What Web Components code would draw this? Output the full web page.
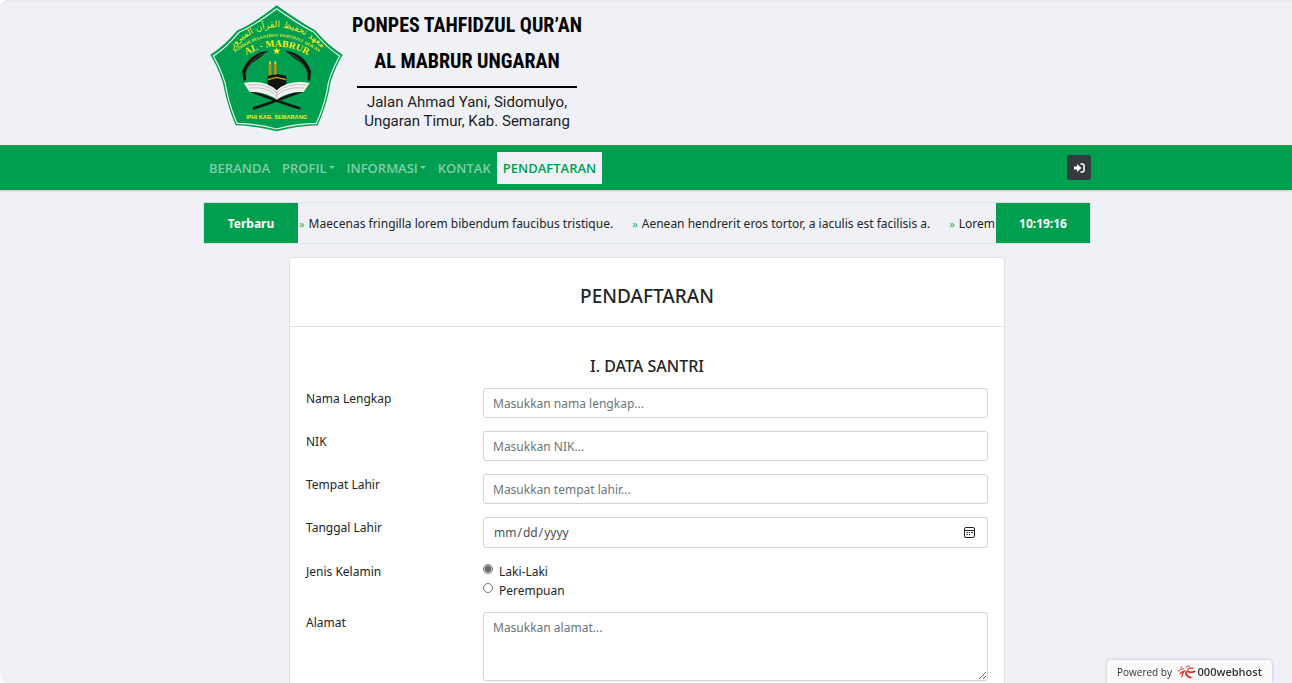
<!DOCTYPE html>
<html lang="id">
<head>
<meta charset="utf-8">
<title>Pendaftaran - Ponpes Tahfidzul Qur'an Al Mabrur</title>
<style>
  :root { --green: #009e4f; --page: #f0f1f7; --ink: #212529; --line: #dee2e6; }
  html { background: #fff; }
  body {
    margin: 0; height: 100vh; overflow: hidden;
    background: var(--page); color: var(--ink);
    box-shadow: inset 0 2px #e9eaed; border-radius: 8px 0 0 8px;
    font: 12px/22px "Noto Sans", "Open Sans", sans-serif;
  }
  main { padding-left: 2px; }
</style>
</head>
<body>
<site-header></site-header>
<nav-bar>
  <nav-link href="#beranda">BERANDA</nav-link>
  <nav-link href="#profil" menu>PROFIL</nav-link>
  <nav-link href="#informasi" menu>INFORMASI</nav-link>
  <nav-link href="#kontak">KONTAK</nav-link>
  <nav-link href="#pendaftaran" active>PENDAFTARAN</nav-link>
</nav-bar>
<main>
<news-ticker label="Terbaru" time="10:19:16">
  <news-item>Maecenas fringilla lorem bibendum faucibus tristique.</news-item>
  <news-item>Aenean hendrerit eros tortor, a iaculis est facilisis a.</news-item>
  <news-item>Lorem</news-item>
</news-ticker>
<form-card heading="PENDAFTARAN" section="I. DATA SANTRI">
  <form-row label="Nama Lengkap" hint="Masukkan nama lengkap..."></form-row>
  <form-row label="NIK" hint="Masukkan NIK..."></form-row>
  <form-row label="Tempat Lahir" hint="Masukkan tempat lahir..."></form-row>
  <form-row label="Tanggal Lahir" kind="date"></form-row>
  <form-row label="Jenis Kelamin" kind="radio" options="Laki-Laki,Perempuan"></form-row>
  <form-row label="Alamat" kind="area" hint="Masukkan alamat..."></form-row>
</form-card>
</main>
<host-badge></host-badge>

<script>
const define = (name, render) => customElements.define(name, class extends HTMLElement {
  constructor() { super(); this.attachShadow({ mode: "open" }); }
  connectedCallback() { this.shadowRoot.innerHTML = render(this); }
});

define("site-logo", () => `
<style>
  :host { display: block; width: 150px; height: 140px; }
  svg { display: block; width: 100%; height: 100%; }
</style>
<svg viewBox="0 0 450 420" role="img" aria-label="Al-Mabrur">
  <defs>
    <path id="arab" d="M84 156 Q230 8 378 156"/>
    <path id="arc" d="M92 168 Q230 52 370 168"/>
    <path id="name" d="M128 172 Q230 108 334 172"/>
  </defs>
  <path d="M230 16 Q310 72 346 91 Q386 139 428 164 Q390 232 387 274 Q374 330 353 376 Q290 378 230 394 Q168 378 107 376 Q87 330 74 274 Q68 227 31 164 Q72 139 112 91 Q158 72 230 16Z" fill="#009e4f"/>
  <path d="M230 26 Q306 79 341 96 Q380 143 419 168 Q384 232 381 274 Q369 327 349 370 Q290 371 230 387 Q170 371 111 370 Q92 327 80 274 Q75 230 40 168 Q77 145 117 97 Q158 80 230 26Z" fill="none" stroke="#e7f7ea" stroke-width="3.5"/>
  <g fill="#f3ec1e" text-anchor="middle">
    <text font-family="DejaVu Sans, sans-serif" font-size="27"><textPath href="#arab" startOffset="50%">معهد تحفيظ القرآن المبرور</textPath></text>
    <text font-family="Liberation Serif, serif" font-weight="700" font-size="13"><textPath href="#arc" startOffset="50%">PONDOK PESANTREN TAHFIDZUL QUR'AN</textPath></text>
    <text font-family="Liberation Serif, serif" font-weight="700" font-size="29"><textPath href="#name" startOffset="50%">AL - MABRUR</textPath></text>
    <text x="230" y="356" font-family="Liberation Sans, sans-serif" font-weight="700" font-size="17">IPHI KAB. SEMARANG</text>
    <path d="M230 142l3 7h8l-6 6 2 8-7-5-7 5 2-8-6-6h8z"/>
  </g>
  <g fill="#101510">
    <path d="M204 152Q146 160 127 214L130 244 138 240Q134 208 160 186Q188 168 204 152Z"/>
    <path d="M256 152Q314 160 333 214L330 244 322 240Q326 208 300 186Q272 168 256 152Z"/>
    <path d="M203 228l27-7 29 7v42h-56z"/>
  </g>
  <path d="M198 158Q150 174 134 226M262 158Q310 174 326 226" stroke="#7d967f" stroke-width="1.5" fill="none"/>
  <path d="M204 239l26-7 28 7" fill="none" stroke="#d9a51e" stroke-width="4"/>
  <path d="M210 190v36M226 190v34" stroke="#b8901c" stroke-width="8"/>
  <path d="M210 184v8M226 184v8" stroke="#e7d322" stroke-width="5"/>
  <path d="M162 325Q215 308 304 274M298 325Q245 308 156 274" fill="none" stroke="#101510" stroke-width="8" stroke-linecap="round"/>
  <path d="M131 249Q195 238 230 271Q265 238 329 249L311 276Q262 274 230 299Q198 274 149 276Z" fill="#f2f2f2"/>
  <path d="M143 255Q200 248 230 278Q260 248 317 255M148 264Q200 258 230 287Q260 258 312 264M230 271v26" fill="none" stroke="#a6aaa6" stroke-width="2"/>
</svg>`);

define("site-header", () => `
<style>
  :host { display: block; color: #000; }
  .wrap { max-width: 892px; margin: 0 auto; display: flex; height: 145px; }
  .text { width: 224px; margin-left: 5px; padding-top: 7px; text-align: center; }
  h1 { margin: 0; font: 700 20px/36px "Liberation Sans Narrow", "Roboto Condensed", Roboto, sans-serif; white-space: nowrap; display: flex; flex-direction: column; align-items: center; }
  p { margin: 7px 2px 0; padding-top: 5px; border-top: 2px solid #000; font: 15px/19px Roboto, sans-serif; color: #1c1c1e; white-space: nowrap; display: flex; flex-direction: column; align-items: center; }
</style>
<header class="wrap">
  <site-logo></site-logo>
  <div class="text">
    <h1><span>PONPES TAHFIDZUL QUR’AN</span><span>AL MABRUR UNGARAN</span></h1>
    <p><span>Jalan Ahmad Yani, Sidomulyo,</span><span>Ungaran Timur, Kab. Semarang</span></p>
  </div>
</header>`);

define("nav-bar", () => `
<style>
  :host { display: block; padding-left: 2px; background: var(--green); box-shadow: 0 1px 2px rgba(0,0,0,.2); }
  nav { max-width: 888px; margin: 0 auto; height: 45px; display: flex; align-items: center; }
  .links { display: flex; flex: 1; }
  button { width: 24px; height: 25px; padding: 0; border: 0; border-radius: 3px; background: #343a40; display: grid; place-items: center; }
</style>
<nav>
  <div class="links"><slot></slot></div>
  <button type="button" aria-label="Masuk">
    <svg width="11" height="10" viewBox="0 0 22 20"><path d="M0 7h6V2l9 8-9 8v-5H0z" fill="#fff"/><path d="M13 2h4q3 0 3 3v10q0 3-3 3h-4" fill="none" stroke="#fff" stroke-width="3"/></svg>
  </button>
</nav>`);

define("nav-link", el => `
<style>
  :host { display: block; }
  a { display: flex; align-items: center; gap: 2px; height: 32px; padding: 0 6px; color: rgba(255,255,255,.5); font: 600 13px/20px "Open Sans", sans-serif; text-decoration: none; white-space: nowrap; }
  :host([active]) a { background: var(--page); color: var(--green); }
  i { border: 3px solid transparent; border-top-color: currentColor; border-bottom: 0; }
</style>
<a href="${el.getAttribute("href")}"><slot></slot>${el.hasAttribute("menu") ? "<i></i>" : ""}</a>`);

define("news-ticker", el => `
<style>
  :host { display: block; max-width: 886px; margin: 12px auto 0; border: 1px solid var(--line); }
  section { display: flex; height: 40px; line-height: 42px; }
  b { flex: 0 0 94px; background: var(--green); color: #fff; text-align: center; font: 700 12px/42px "Noto Sans", sans-serif; }
  .track { flex: 1; min-width: 0; overflow: hidden; display: flex; gap: 18px; }
</style>
<section><b>${el.getAttribute("label")}</b><div class="track"><slot></slot></div><b>${el.getAttribute("time")}</b></section>`);

define("news-item", () => `
<style>
  :host { display: flex; flex: none; gap: 4px; padding-left: 1px; white-space: nowrap; }
  span { color: #2fae70; font-size: 11px; }
</style>
<span>»</span><slot></slot>`);

define("form-card", el => `
<style>
  :host { display: block; max-width: 714px; margin: 13px auto 16px; background: #fff; border: 1px solid var(--line); border-radius: 4px; }
  h1, h2 { margin: 0; text-align: center; font-weight: 500; }
  h1 { padding: 26px 0 18px; font-size: 19px; line-height: 24px; border-bottom: 1px solid #e2e3e5; }
  h2 { font-size: 16px; line-height: 20px; padding: 29px 0 12px; }
  form { padding: 0 16px 16px; }
  .rows { display: flex; flex-direction: column; gap: 13px; }
</style>
<h1>${el.getAttribute("heading")}</h1>
<form><h2>${el.getAttribute("section")}</h2><div class="rows"><slot></slot></div></form>`);

define("form-row", el => {
  const kind = el.getAttribute("kind") || "text";
  const hint = el.getAttribute("hint") || "";
  const label = el.getAttribute("label");
  const control = {
    text: () => `<input class="box" id="f" type="text" placeholder="${hint}">`,
    date: () => `<input class="box" id="f" type="date">`,
    area: () => `<textarea class="box" id="f" placeholder="${hint}"></textarea>`,
    radio: () => `<div role="radiogroup" aria-label="${label}">${el.getAttribute("options").split(",").map((o, i) =>
      `<label class="opt"><input type="radio" name="r" ${i ? "" : "checked"}>${o}</label>`).join("")}</div>`
  }[kind]();
  const head = kind === "radio" ? `<span>${label}</span>` : `<label for="f">${label}</label>`;
  return `
<style>
  :host { display: grid; grid-template-columns: 177px 1fr; align-items: start; }
  span, label { height: 20px; }
  .box { display: block; box-sizing: border-box; width: 100%; height: 30px; margin: 0; padding: 4px 9px; border: 1px solid #ced4da; border-radius: 3px; background: #fff; color: #495057; font: inherit; }
  .box::placeholder { color: #6c757d; }
  input[type=date] { height: 31px; }
  textarea.box { height: 69px; }
  ::-webkit-datetime-edit-fields-wrapper, ::-webkit-datetime-edit { padding: 0; }
  ::-webkit-calendar-picker-indicator { width: 13px; height: 13px; padding: 0; margin-right: 2px; background: center / 13px 13px no-repeat url("data:image/svg+xml,%3Csvg xmlns='http://www.w3.org/2000/svg' viewBox='0 0 13 13'%3E%3Crect x='1.5' y='1.5' width='10' height='10' rx='1.5' fill='none' stroke='%23222'/%3E%3Cpath d='M1 4.5h11M6 6.5h1M8 6.5h2M3.500 6.500h1.500M3.500 8.500h1.500M6 8.500h1' stroke='%23222' fill='none'/%3E%3C/svg%3E"); }
  .opt { display: flex; gap: 6px; height: 19px; line-height: 22px; }
  .opt input { appearance: none; box-sizing: border-box; width: 10px; height: 10px; margin: 3px 0 0; border: 1px solid #767676; border-radius: 50%; background: #fff; }
  .opt input:checked { background: radial-gradient(circle, #6b6b6b 3px, #fff 4px); }
</style>${head}${control}`;
});

define("host-badge", () => `
<style>
  :host { position: fixed; right: 20px; bottom: 0; }
  a { display: flex; align-items: center; gap: 5px; box-sizing: border-box; width: 165px; height: 23px; padding: 0 10px; background: #fafafb; border-radius: 4px 4px 0 0; box-shadow: 0 0 3px rgba(0,0,0,.25); color: #333; font: 10px/22px "Open Sans", sans-serif; text-decoration: none; white-space: nowrap; }
  strong { font: 600 11px/22px "Open Sans", sans-serif; margin-left: -3px; }
</style>
<a href="#host"><span>Powered by</span>
<svg width="20" height="16" viewBox="0 0 60 48" fill="none" stroke="#e22b2b" stroke-linecap="round"><path d="M4 22Q10 14 22 13" stroke-width="3"/><path d="M10 29Q18 21 24 21Q17 26 16 39" stroke-width="4"/><path d="M30 24Q26 35 44 42" stroke-width="6"/><path d="M35 21Q40 29 57 22" stroke-width="6"/><path d="M35 15Q39 10 52 12" stroke-width="4"/><path d="M28 8Q32 3 40 5M12 10l4-2" stroke-width="3"/></svg>
<strong>000webhost</strong></a>`);
</script>
</body>
</html>
